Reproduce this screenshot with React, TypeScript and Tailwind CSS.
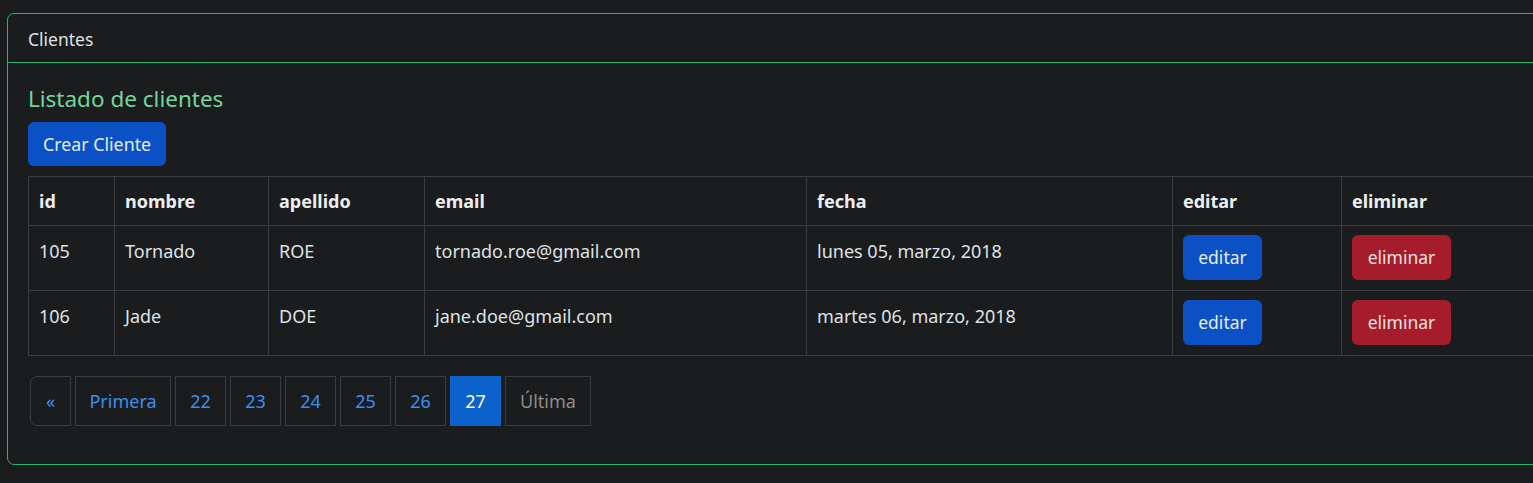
import React from "react"

const rows = [
  { id: 105, nombre: "Tornado", apellido: "ROE", email: "tornado.roe@gmail.com", fecha: "lunes 05, marzo, 2018" },
  { id: 106, nombre: "Jade", apellido: "DOE", email: "jane.doe@gmail.com", fecha: "martes 06, marzo, 2018" },
]

const pages = ["22", "23", "24", "25", "26"]

export default function App() {
  return (
    <div
      className="w-[1533px] h-[483px] overflow-hidden bg-[#1b1c1e] text-[#dee2e6] pt-[13px] pl-[7px]"
      style={{ fontFamily: '"Noto Sans", "Open Sans", sans-serif' }}
    >
      <div className="w-[1580px] h-[452px] border border-[#27b56d] rounded-[7px] flex flex-col">
        <div className="h-[49px] border-b border-[#27b56d] flex items-center pt-[3px] px-[20px] text-[17.5px] text-[#dee2e6]">
          Clientes
        </div>
        <div className="px-[20px] pt-[20px]">
          <h5 className="text-[22.5px] leading-[32px] text-[#75d59c] mb-[7px]">Listado de clientes</h5>
          <button className="h-[44px] px-[15px] rounded-[6px] bg-[#0b51c5] text-[17.8px] text-[#e6ecf5]">
            Crear Cliente
          </button>
          <table className="mt-[10px] border-collapse text-[18px] w-[1520px] table-fixed">
            <colgroup>
              <col className="w-[86px]" />
              <col className="w-[154px]" />
              <col className="w-[156px]" />
              <col className="w-[382px]" />
              <col className="w-[366px]" />
              <col className="w-[169px]" />
              <col />
            </colgroup>
            <thead>
              <tr className="h-[49px]">
                {["id", "nombre", "apellido", "email", "fecha", "editar", "eliminar"].map((h) => (
                  <th key={h} className="border border-[#3a3d41] px-[10px] text-left font-bold text-[#eceef0]">
                    {h}
                  </th>
                ))}
              </tr>
            </thead>
            <tbody>
              {rows.map((r) => (
                <tr key={r.id} className="h-[65px]">
                  <td className="border border-[#3a3d41] px-[10px] align-top pt-[12px]">{r.id}</td>
                  <td className="border border-[#3a3d41] px-[10px] align-top pt-[12px]">{r.nombre}</td>
                  <td className="border border-[#3a3d41] px-[10px] align-top pt-[12px]">{r.apellido}</td>
                  <td className="border border-[#3a3d41] px-[10px] align-top pt-[12px]">{r.email}</td>
                  <td className="border border-[#3a3d41] px-[10px] align-top pt-[12px]">{r.fecha}</td>
                  <td className="border border-[#3a3d41] px-[10px] align-top pt-[9px]">
                    <button className="h-[45px] w-[79px] rounded-[6px] bg-[#0b51c5] text-[17.5px] text-[#e6ecf5]">editar</button>
                  </td>
                  <td className="border border-[#3a3d41] px-[10px] align-top pt-[9px]">
                    <button className="h-[45px] w-[99px] rounded-[6px] bg-[#a51d2d] text-[17.5px] text-[#f0e0e2]">eliminar</button>
                  </td>
                </tr>
              ))}
            </tbody>
          </table>
          <nav className="mt-[20px] ml-[2px] flex gap-[4px] text-[18px]">
            <span className="h-[50px] w-[41px] flex items-center justify-center border border-[#3a3d41] rounded-l-[7px] text-[#3b8ff3]">
              «
            </span>
            <span className="h-[50px] w-[96px] flex items-center justify-center border border-[#3a3d41] text-[#3b8ff3]">
              Primera
            </span>
            {pages.map((p) => (
              <span key={p} className="h-[50px] w-[51px] flex items-center justify-center border border-[#3a3d41] text-[#3b8ff3]">
                {p}
              </span>
            ))}
            <span className="h-[50px] w-[51px] flex items-center justify-center border border-[#0b62cc] bg-[#0b62cc] text-white">
              27
            </span>
            <span className="h-[50px] w-[86px] flex items-center justify-center border border-[#3a3d41] text-[#8f8c86]">
              Última
            </span>
          </nav>
        </div>
      </div>
    </div>
  )
}
